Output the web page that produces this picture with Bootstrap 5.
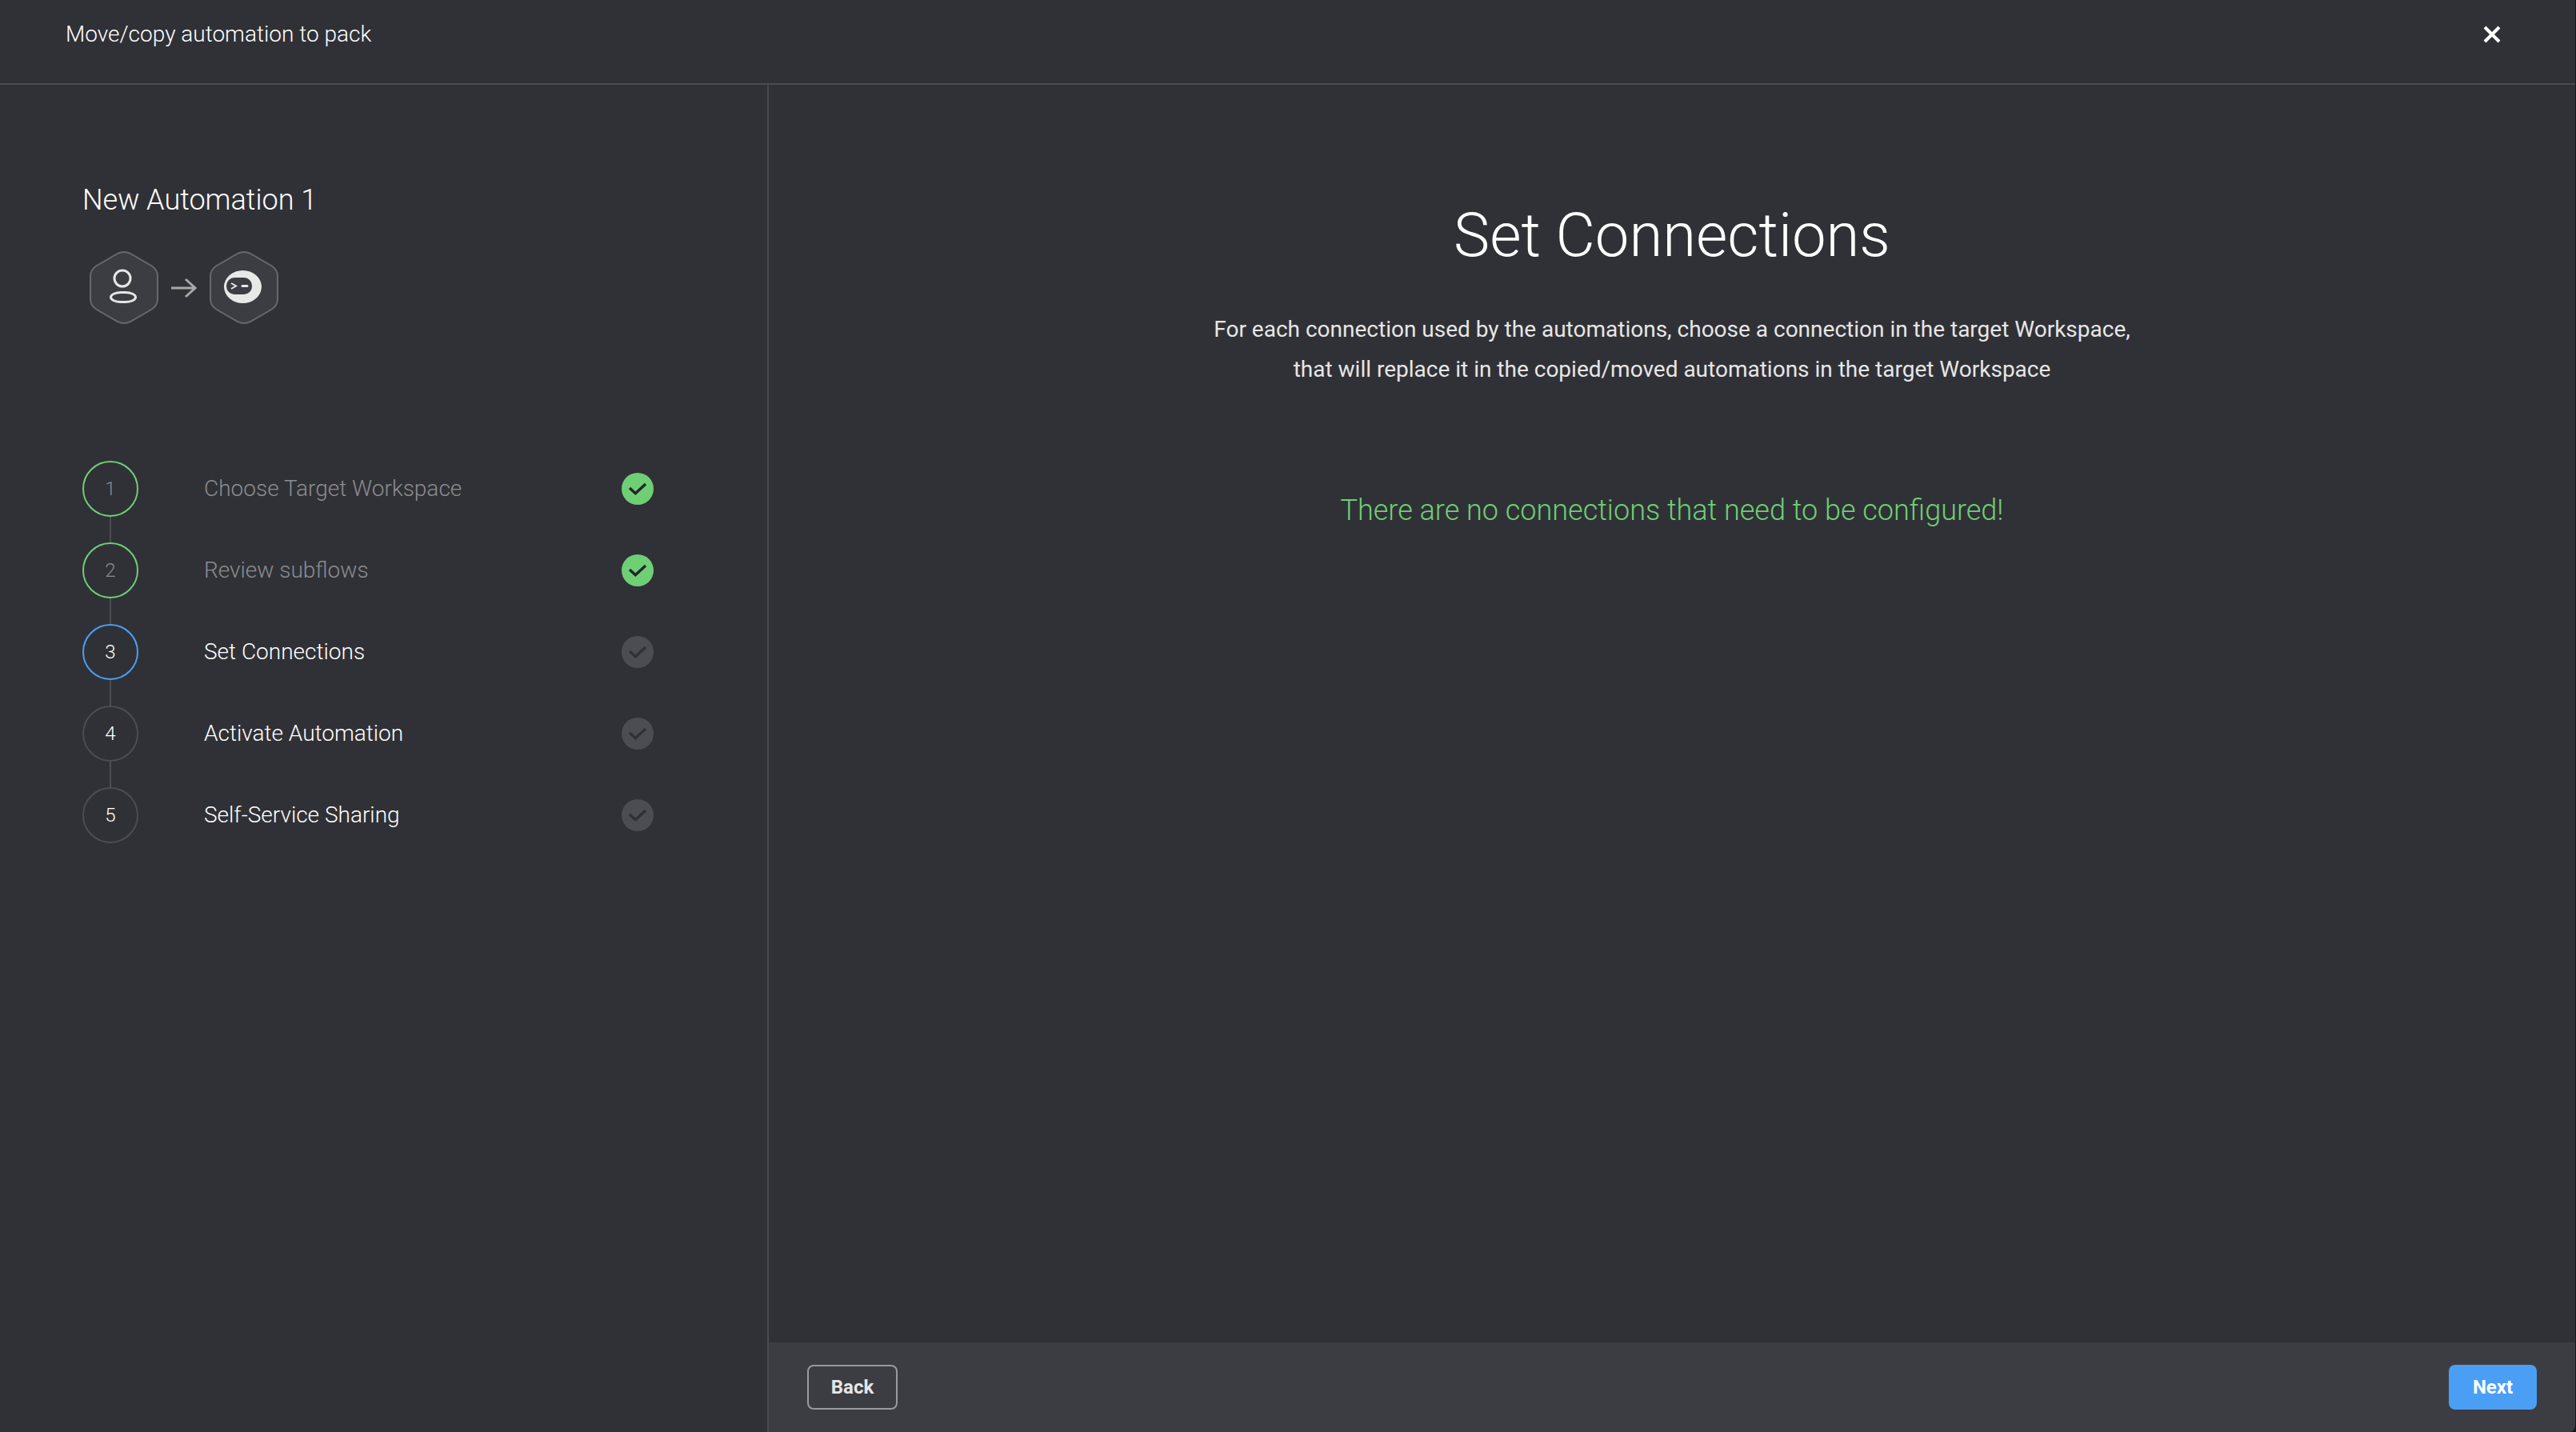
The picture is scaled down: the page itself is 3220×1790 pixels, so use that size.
<!DOCTYPE html>
<html lang="en">
<head>
  <meta charset="UTF-8">
  <title>Move/copy automation to pack</title>
  <link href="https://cdn.jsdelivr.net/npm/bootstrap@5.3.2/dist/css/bootstrap.min.css" rel="stylesheet">
  <style>
    html, body { height: 100%; }
    html { background: #17181b; }
    body { background: #303136; color: #fff; font-family: Roboto, "Liberation Sans", sans-serif; overflow: hidden; border-right: 1px solid #17181b; border-bottom-right-radius: 8px; }
    .top-bar { height: 106px; padding: 0 93px 18px 82px; border-bottom: 2px solid #4a4b50; }
    .top-title { font-size: 28px; font-weight: 300; }
    .close-x { background: none; border: 0; padding: 0; line-height: 0; }
    .side-panel { width: 961px; flex: 0 0 961px; border-right: 2px solid #4a4b50; padding: 122px 0 0 103px; }
    .auto-name { font-size: 36px; font-weight: 300; line-height: 44px; margin: 0 0 41px; }
    .auto-icons { padding-left: 9px; margin-bottom: 170px; gap: 15px; }
    .step-row { height: 70px; width: 714px; }
    .step-num { width: 70px; height: 70px; flex: 0 0 70px; border: 2px solid #4c4d52; border-radius: 50%; font-size: 24px; font-weight: 300; }
    .step-label { font-size: 28px; font-weight: 300; margin-left: 82px; }
    .step-check { width: 40px; height: 40px; flex: 0 0 40px; border-radius: 50%; background: #4c4d52; color: #303136; }
    .step-link { width: 2px; height: 32px; margin-left: 34px; background: #4c4d52; }
    .step-done .step-num { border-color: #6fcf75; color: #8b8c90; }
    .step-done .step-label { color: #8b8c90; }
    .step-done .step-check { background: #6fcf75; color: #24252a; }
    .step-now .step-num { border-color: #4a9ff5; }
    .main-body { padding-top: 140px; }
    .main-title { font-size: 76px; font-weight: 300; line-height: 96px; margin: 0 0 45px; }
    .main-text { font-size: 28px; line-height: 50px; color: #e6e6e6; margin: 0 0 127px; }
    .main-ok { font-size: 36px; font-weight: 300; line-height: 48px; color: #6fcf75; }
    .foot-bar { height: 112px; background: #3c3d42; padding: 0 48px; border-bottom-right-radius: 8px; }
    .btn-back, .btn-next { height: 56px; border-radius: 8px; font-size: 24px; font-weight: 700; padding: 0; }
    .btn-back { width: 113px; border: 2px solid #9a9a9d; color: #e6e6e6; background: transparent; }
    .btn-next { width: 110px; border: 0; background: #4a9ff5; color: #fff; }
  </style>
</head>
<body class="d-flex flex-column">

  <!-- top bar -->
  <header class="top-bar d-flex align-items-center justify-content-between">
    <div class="top-title">Move/copy automation to pack</div>
    <button class="close-x" type="button" aria-label="Close">
      <svg width="22" height="22" viewBox="0 0 22 22"><path d="M2 2 20 20M20 2 2 20" stroke="#fff" stroke-width="4"/></svg>
    </button>
  </header>

  <div class="d-flex flex-grow-1">
    <!-- left panel -->
    <aside class="side-panel">
      <h2 class="auto-name">New Automation 1</h2>
      <div class="auto-icons d-flex align-items-center">
        <svg width="86" height="93" viewBox="0 0 86 93">
          <path d="M35 4Q43 0 51 4L77 19Q85 24 85 32V61Q85 69 77 74L51 89Q43 93 35 89L9 74Q1 69 1 61V32Q1 24 9 19Z" fill="#3c3d42" stroke="#67686c" stroke-width="2"/>
          <circle cx="41" cy="35" r="10" fill="none" stroke="#e6e6e6" stroke-width="3"/>
          <rect x="26.500" y="52.500" width="31" height="12" rx="13" ry="6" fill="none" stroke="#e6e6e6" stroke-width="3"/>
        </svg>
        <svg width="34" height="26" viewBox="0 0 34 26"><path d="M1 13H31M19 2 31 13 19 24" fill="none" stroke="#a8a8aa" stroke-width="3"/></svg>
        <svg width="86" height="93" viewBox="0 0 86 93">
          <path d="M35 4Q43 0 51 4L77 19Q85 24 85 32V61Q85 69 77 74L51 89Q43 93 35 89L9 74Q1 69 1 61V32Q1 24 9 19Z" fill="#3c3d42" stroke="#67686c" stroke-width="2"/>
          <ellipse cx="41.500" cy="45.500" rx="23.500" ry="20.500" fill="#e8e8e8"/>
          <rect x="21" y="34" width="32" height="21" rx="10" fill="#3c3d42"/>
          <path d="M27 41 33 44.500 27 48" fill="none" stroke="#e8e8e8" stroke-width="2"/>
          <path d="M41 44.500H47" stroke="#e8e8e8" stroke-width="3" stroke-linecap="round"/>
        </svg>
      </div>

      <div class="step-row step-done d-flex align-items-center">
        <div class="step-num d-flex align-items-center justify-content-center">1</div>
        <div class="step-label flex-grow-1">Choose Target Workspace</div>
        <div class="step-check"><svg width="40" height="40" viewBox="0 0 40 40"><path d="M10 19 17.300 25.700 30 14" fill="none" stroke="currentColor" stroke-width="3.500"/></svg></div>
      </div>
      <div class="step-link"></div>
      <div class="step-row step-done d-flex align-items-center">
        <div class="step-num d-flex align-items-center justify-content-center">2</div>
        <div class="step-label flex-grow-1">Review subflows</div>
        <div class="step-check"><svg width="40" height="40" viewBox="0 0 40 40"><path d="M10 19 17.300 25.700 30 14" fill="none" stroke="currentColor" stroke-width="3.500"/></svg></div>
      </div>
      <div class="step-link"></div>
      <div class="step-row step-now d-flex align-items-center">
        <div class="step-num d-flex align-items-center justify-content-center">3</div>
        <div class="step-label flex-grow-1">Set Connections</div>
        <div class="step-check"><svg width="40" height="40" viewBox="0 0 40 40"><path d="M10 19 17.300 25.700 30 14" fill="none" stroke="currentColor" stroke-width="3.500"/></svg></div>
      </div>
      <div class="step-link"></div>
      <div class="step-row d-flex align-items-center">
        <div class="step-num d-flex align-items-center justify-content-center">4</div>
        <div class="step-label flex-grow-1">Activate Automation</div>
        <div class="step-check"><svg width="40" height="40" viewBox="0 0 40 40"><path d="M10 19 17.300 25.700 30 14" fill="none" stroke="currentColor" stroke-width="3.500"/></svg></div>
      </div>
      <div class="step-link"></div>
      <div class="step-row d-flex align-items-center">
        <div class="step-num d-flex align-items-center justify-content-center">5</div>
        <div class="step-label flex-grow-1">Self-Service Sharing</div>
        <div class="step-check"><svg width="40" height="40" viewBox="0 0 40 40"><path d="M10 19 17.300 25.700 30 14" fill="none" stroke="currentColor" stroke-width="3.500"/></svg></div>
      </div>
    </aside>

    <!-- main -->
    <main class="d-flex flex-column flex-grow-1">
      <div class="main-body flex-grow-1 text-center">
        <h1 class="main-title">Set Connections</h1>
        <p class="main-text">For each connection used by the automations, choose a connection in the target Workspace,<br>that will replace it in the copied/moved automations in the target Workspace</p>
        <div class="main-ok">There are no connections that need to be configured!</div>
      </div>
      <div class="foot-bar d-flex align-items-center justify-content-between">
        <button class="btn btn-back" type="button">Back</button>
        <button class="btn btn-next" type="button">Next</button>
      </div>
    </main>
  </div>

  <script src="https://cdn.jsdelivr.net/npm/bootstrap@5.3.2/dist/js/bootstrap.bundle.min.js"></script>
</body>
</html>
